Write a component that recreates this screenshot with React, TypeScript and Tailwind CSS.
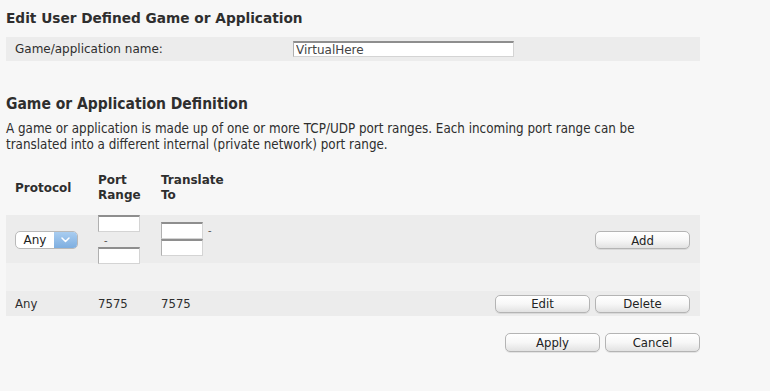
import React from 'react';

const verdana = { fontFamily: '"DejaVu Sans", Verdana, sans-serif' };
const narrow = { fontFamily: '"DejaVu Sans Condensed", "DejaVu Sans", sans-serif' };

const MacButton = ({ label, className = '' }: { label: string; className?: string }) => (
    <button
        type="button"
        style={narrow}
        className={`h-[18px] rounded-[5px] border border-[#b4b4b4] bg-gradient-to-b from-white via-[#f7f7f7] to-[#e2e2e2] text-[13px] leading-none text-[#222] shadow-[0_1px_0_rgba(0,0,0,0.08)] ${className}`}
    >
        {label}
    </button>
);

const PortInput = ({ className = '' }: { className?: string }) => (
    <input
        type="text"
        className={`block h-[17px] w-[42px] border border-t-2 border-[#d4d4d4] border-t-[#8e8e8e] border-l-[#b0b0b0] bg-white outline-none ${className}`}
    />
);

const ProtocolSelect = () => (
    <div className="flex h-[18px] w-[63px] overflow-hidden rounded-[5px] border border-[#b9b9b9] bg-white">
        <span style={verdana} className="flex flex-1 items-center justify-center text-[12px] text-[#222]">
            Any
        </span>
        <span className="flex w-[23px] items-center justify-center bg-gradient-to-b from-[#a9cdf0] to-[#7eaee0]">
            <svg width="9" height="6" viewBox="0 0 9 6" fill="none">
                <path d="M1 1l3.5 3.5L8 1" stroke="white" strokeWidth="1.5" strokeLinecap="round" strokeLinejoin="round" />
            </svg>
        </span>
    </div>
);

export default function App() {
    return (
        <div className="h-[391px] w-[770px] overflow-hidden bg-[#f7f7f7] text-[#2e2e2e]">
            <div className="w-[700px] pl-[6px]">
                <h1 style={verdana} className="flex h-[37px] items-center text-[13.7px] font-bold">
                    Edit User Defined Game or Application
                </h1>

                <div className="flex h-[24px] items-center bg-[#ececec] pl-[9px]">
                    <span style={verdana} className="w-[278px] text-[12px]">
                        Game/application name:
                    </span>
                    <input
                        type="text"
                        defaultValue="VirtualHere"
                        style={verdana}
                        className="h-[16px] w-[221px] border border-t-2 border-[#d4d4d4] border-t-[#8e8e8e] border-l-[#b0b0b0] bg-white px-[2px] text-[12px] leading-none text-[#444] outline-none"
                    />
                </div>

                <h2 style={narrow} className="mt-[33px] text-[15.5px] font-bold leading-[20px]">
                    Game or Application Definition
                </h2>
                <p style={narrow} className="mt-[7px] text-[13.3px] leading-[16px]">
                    A game or application is made up of one or more TCP/UDP port ranges. Each incoming port range can be
                    <br />
                    translated into a different internal (private network) port range.
                </p>

                {/* column headers */}
                <div style={verdana} className="mt-[20px] flex h-[42px] pl-[9px] text-[12px] font-bold leading-[15px]">
                    <div className="flex h-[30px] w-[83px] items-center">Protocol</div>
                    <div className="w-[63px]">
                        Port
                        <br />
                        Range
                    </div>
                    <div>
                        Translate
                        <br />
                        To
                    </div>
                </div>

                {/* entry row */}
                <div className="flex h-[48px] items-start bg-[#ececec] pl-[9px] pr-[10px]">
                    <div className="flex h-full w-[83px] items-center pt-[1px]">
                        <ProtocolSelect />
                    </div>
                    <div className="w-[63px]">
                        <PortInput />
                        <div className="h-[15px] pl-[6px] text-[11px] leading-[15px] text-[#555]">-</div>
                        <PortInput className="h-[16px]" />
                    </div>
                    <div className="flex pt-[7px]">
                        <div>
                            <PortInput className="h-[16px]" />
                            <PortInput className="h-[17px]" />
                        </div>
                        <span className="ml-[5px] text-[11px] leading-[16px] text-[#555]">-</span>
                    </div>
                    <div className="flex h-full flex-1 items-center justify-end pt-[2px]">
                        <MacButton label="Add" className="w-[95px]" />
                    </div>
                </div>

                <div className="h-[28px] bg-[#f2f2f2]" />

                {/* existing entry */}
                <div style={narrow} className="flex h-[25px] items-center bg-[#ececec] pl-[9px] pr-[10px] text-[13px]">
                    <span className="w-[83px]">Any</span>
                    <span className="w-[63px]">7575</span>
                    <span>7575</span>
                    <div className="ml-auto flex gap-[5px]">
                        <MacButton label="Edit" className="w-[95px]" />
                        <MacButton label="Delete" className="w-[95px]" />
                    </div>
                </div>

                <div className="mt-[17px] flex justify-end gap-[5px]">
                    <MacButton label="Apply" className="h-[19px] w-[95px]" />
                    <MacButton label="Cancel" className="h-[19px] w-[95px]" />
                </div>
            </div>
        </div>
    );
}
